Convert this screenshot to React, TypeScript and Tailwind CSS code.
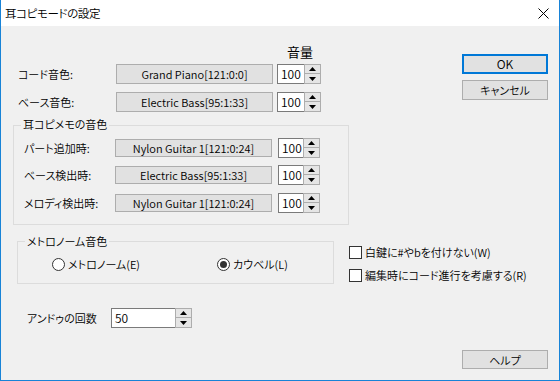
import React from "react";

function Tri({ down }: { down?: boolean }) {
  return (
    <svg width="7" height="4" viewBox="0 0 7 4" className="block">
      {down ? <polygon points="0,0 7,0 3.5,4" fill="#000" /> : <polygon points="0,4 7,4 3.5,0" fill="#000" />}
    </svg>
  );
}

function Spin() {
  return (
    <div className="flex flex-col w-[17px] h-[20px]">
      <div className="h-[10px] border border-[#adadad] bg-[#e5e5e5] flex items-center justify-center">
        <Tri />
      </div>
      <div className="h-[10px] border border-[#adadad] border-t-0 bg-[#e5e5e5] flex items-center justify-center">
        <Tri down />
      </div>
    </div>
  );
}

function SpinEdit({ value, editW }: { value: string; editW: string }) {
  return (
    <div className="flex">
      <div className={`${editW} h-[20px] bg-white border border-r-0 border-[#7a7a7a] pl-[3px] leading-[18px] text-[12px]`}>{value}</div>
      <Spin />
    </div>
  );
}

function Btn({ children, cls }: { children: React.ReactNode; cls: string }) {
  return (
    <div className={`${cls} bg-[#e1e1e1] border border-[#adadad] flex items-center justify-center leading-[16px]`}>
      {children}
    </div>
  );
}

export default function App() {
  return (
    <div className="w-[560px] h-[381px] flex flex-col border-l border-r border-b border-[#1883d7] font-['Noto_Sans_CJK_JP',sans-serif] font-[350] [font-feature-settings:'palt'] text-[11px] text-black leading-[16px]">
      <div className="h-[26px] bg-white flex items-center pl-[4px] pr-[10px] justify-between">
        <span className="text-[11.5px] tracking-[-0.4px]">耳コピモードの設定</span>
        <svg width="11" height="11" viewBox="0 0 11 11">
          <line x1="0.5" y1="0.5" x2="10.5" y2="10.5" stroke="#000" strokeWidth="1" />
          <line x1="10.5" y1="0.5" x2="0.5" y2="10.5" stroke="#000" strokeWidth="1" />
        </svg>
      </div>
      <div className="flex-1 bg-[#f0f0f0] flex flex-col">
        <div className="flex">
          <div className="flex flex-col">
            <div className="h-[16px] mt-[18px] ml-[286px] text-[13px] font-normal">音量</div>
            <div className="flex items-center mt-[4px] h-[20px]">
              <div className="ml-[17px] w-[98px]">コード音色:</div>
              <Btn cls="w-[157px] h-[20px]">Grand Piano[121:0:0]</Btn>
              <div className="ml-[4px]">
                <SpinEdit value="100" editW="w-[27px]" />
              </div>
            </div>
            <div className="flex items-center mt-[8px] h-[20px]">
              <div className="ml-[17px] w-[98px]">ベース音色:</div>
              <Btn cls="w-[157px] h-[20px]">Electric Bass[95:1:33]</Btn>
              <div className="ml-[4px]">
                <SpinEdit value="100" editW="w-[27px]" />
              </div>
            </div>
          </div>
          <div className="ml-auto mr-[11px] flex flex-col">
            <div className="mt-[28px] w-[86px] h-[20px] bg-[#e1e1e1] border-2 border-[#0078d7] flex items-center justify-center text-[12px]">OK</div>
            <Btn cls="mt-[6px] w-[86px] h-[20px]">キャンセル</Btn>
          </div>
        </div>

        <div className="mt-[13px] ml-[12px] w-[336px] h-[100px] border border-[#dcdcdc] flex flex-col">
          <div className="-mt-[10px] ml-[7px] px-[2px] bg-[#f0f0f0] w-fit h-[16px]">耳コピメモの音色</div>
          <div className="flex items-center mt-[6px] h-[20px]">
            <div className="ml-[10px] w-[91px]">パート追加時:</div>
            <Btn cls="w-[157px] h-[18px]">Nylon Guitar 1[121:0:24]</Btn>
            <div className="ml-[6px]">
              <SpinEdit value="100" editW="w-[25px]" />
            </div>
          </div>
          <div className="flex items-center mt-[7px] h-[20px]">
            <div className="ml-[10px] w-[91px]">ベース検出時:</div>
            <Btn cls="w-[157px] h-[18px]">Electric Bass[95:1:33]</Btn>
            <div className="ml-[6px]">
              <SpinEdit value="100" editW="w-[25px]" />
            </div>
          </div>
          <div className="flex items-center mt-[8px] h-[20px]">
            <div className="ml-[10px] w-[91px]">メロディ検出時:</div>
            <Btn cls="w-[157px] h-[18px]">Nylon Guitar 1[121:0:24]</Btn>
            <div className="ml-[6px]">
              <SpinEdit value="100" editW="w-[25px]" />
            </div>
          </div>
        </div>

        <div className="flex mt-[16px]">
          <div className="ml-[16px] w-[317px] h-[43px] border border-[#dcdcdc] flex flex-col">
            <div className="-mt-[9px] ml-[7px] px-[2px] bg-[#f0f0f0] w-fit h-[16px]">メトロノーム音色</div>
            <div className="flex items-center mt-[7px] h-[16px]">
              <div className="ml-[34px] w-[165px] flex items-center">
                <div className="w-[13px] h-[13px] rounded-full border border-[#333] bg-white" />
                <span className="ml-[3px]">メトロノーム(E)</span>
              </div>
              <div className="flex items-center">
                <div className="w-[13px] h-[13px] rounded-full border border-[#333] bg-white flex items-center justify-center">
                  <div className="w-[7px] h-[7px] rounded-full bg-[#333]" />
                </div>
                <span className="ml-[3px]">カウベル(L)</span>
              </div>
            </div>
          </div>
          <div className="ml-[15px] flex flex-col">
            <div className="flex items-center mt-[3px] h-[16px]">
              <div className="w-[13px] h-[13px] border border-[#333] bg-white" />
              <span className="ml-[3px]">白鍵に#やbを付けない(W)</span>
            </div>
            <div className="flex items-center mt-[7px] h-[16px]">
              <div className="w-[13px] h-[13px] border border-[#333] bg-white" />
              <span className="ml-[3px]">編集時にコード進行を考慮する(R)</span>
            </div>
          </div>
        </div>

        <div className="flex items-center mt-[24px] h-[20px]">
          <div className="ml-[26px] w-[84px]">アンドゥの回数</div>
          <SpinEdit value="50" editW="w-[64px]" />
        </div>

        <div className="flex mt-[22px]">
          <Btn cls="ml-auto mr-[11px] w-[86px] h-[19px]">ヘルプ</Btn>
        </div>
      </div>
    </div>
  );
}
